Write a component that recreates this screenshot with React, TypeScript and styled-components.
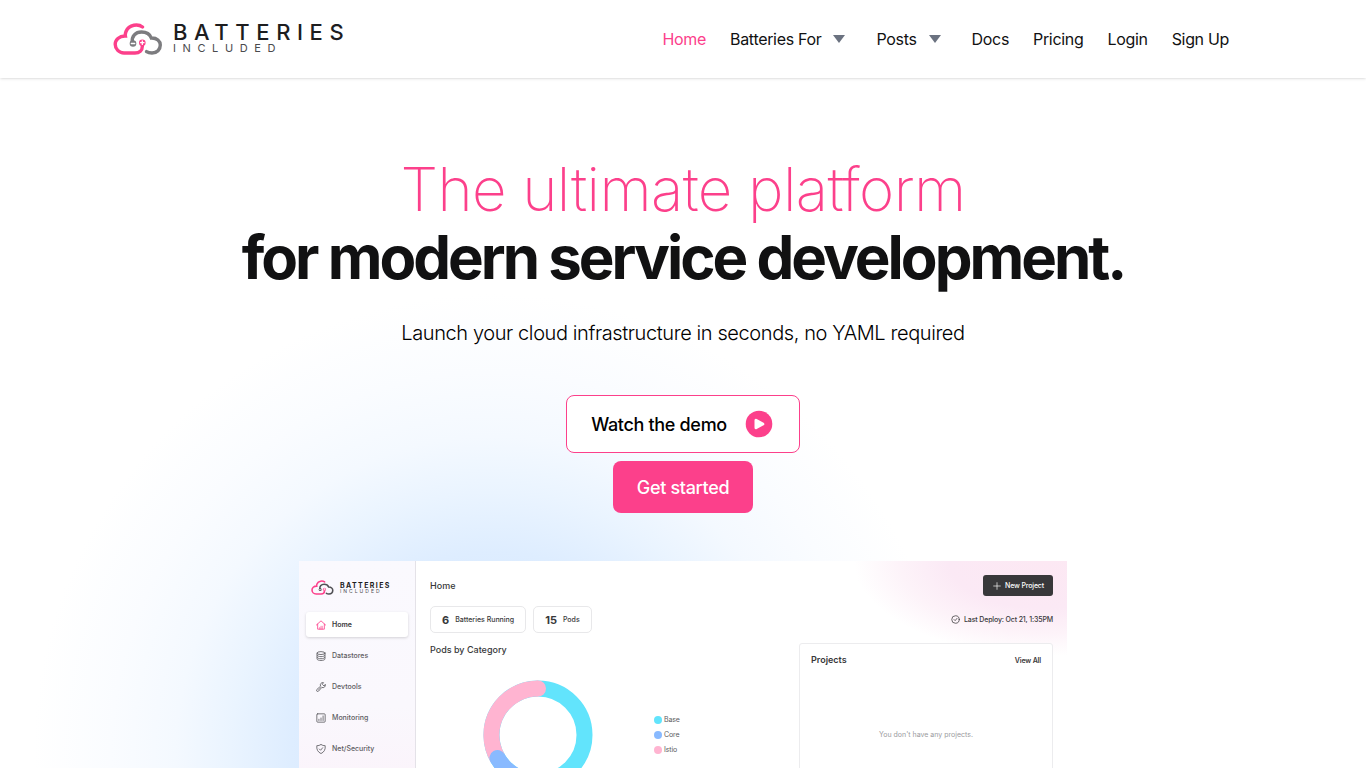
import React from "react";
import styled, { createGlobalStyle } from "styled-components";

const Global = createGlobalStyle`
  * { box-sizing: border-box; }
  html { scrollbar-width: none; }
  body {
    margin: 0;
    background: #fff;
    font-family: Inter, "Liberation Sans", sans-serif;
    letter-spacing: -0.02em;
    color: #111112;
  }
  h1, h2, h3, p, ul { margin: 0; padding: 0; }
  ul { list-style: none; }
  a { color: inherit; text-decoration: none; }
  button { font: inherit; letter-spacing: inherit; cursor: pointer; }
`;

const Page = styled.div`
  min-height: 100vh;
`;

const Header = styled.header`
  background: #fff;
  box-shadow: 0 1px 3px rgba(0, 0, 0, 0.1), 0 1px 2px -1px rgba(0, 0, 0, 0.1);
  position: relative;
`;

const HeaderInner = styled.div`
  max-width: 1140px;
  height: 78px;
  margin: 0 auto;
  padding-right: 12px;
  display: flex;
  align-items: center;
  justify-content: space-between;
`;

const LogoLink = styled.a<{ $small?: boolean }>`
  display: flex;
  align-items: center;
  gap: ${(p) => (p.$small ? "6px" : "10px")};
  margin: ${(p) => (p.$small ? "0 0 17px 5px" : "0")};
`;

const Wordmark = styled.span<{ $small?: boolean }>`
  display: flex;
  flex-direction: column;
  color: #1d1d1f;
  font-size: ${(p) => (p.$small ? "7px" : "22px")};
  line-height: ${(p) => (p.$small ? "7px" : "18px")};
  font-weight: ${(p) => (p.$small ? 700 : 500)};
  letter-spacing: ${(p) => (p.$small ? "0.2em" : "0.3em")};
`;

const WordmarkSub = styled.span<{ $small?: boolean }>`
  color: #4a4a4d;
  font-size: ${(p) => (p.$small ? "5px" : "11px")};
  line-height: ${(p) => (p.$small ? "5px" : "14px")};
  font-weight: 400;
  letter-spacing: ${(p) => (p.$small ? "0.4em" : "0.6em")};
`;

const Nav = styled.nav`
  display: flex;
  align-items: center;
`;

const NavLink = styled.a<{ $active?: boolean }>`
  display: flex;
  align-items: center;
  gap: 12px;
  padding: 8px 12px;
  font-size: 16px;
  line-height: 24px;
  color: ${(p) => (p.$active ? "#fc408b" : "#111112")};
`;

const Caret = styled.span`
  border: 6px solid transparent;
  border-top: 8px solid #6b7280;
  border-bottom: 0;
  margin-right: 7px;
`;

const Hero = styled.main`
  display: flex;
  flex-direction: column;
  align-items: center;
  padding-top: 77px;
  background: radial-gradient(
    circle 460px at calc(50% - 190px) 676px,
    #c8e1ff 0%, #d4e7ff 25%, #deedff 44%, #eaf4ff 57%, #f4f9ff 69%, #fafcff 83%, #ffffff 100%
  );
`;

const Title = styled.h1`
  font-size: 60px;
  line-height: 68px;
  text-align: center;
  font-weight: 700;
  letter-spacing: -0.05em;
`;

const TitleAccent = styled.span`
  display: block;
  font-weight: 200;
  letter-spacing: -0.01em;
  color: #fc408b;
`;

const Lead = styled.p`
  margin-top: 26px;
  font-size: 20px;
  line-height: 32px;
  font-weight: 300;
  letter-spacing: -0.02em;
  color: #000;
`;

const Actions = styled.div`
  display: flex;
  flex-direction: column;
  align-items: center;
  gap: 8px;
  margin-top: 46px;
`;

const ActionButton = styled.button<{ $primary?: boolean }>`
  display: flex;
  align-items: center;
  gap: 18px;
  height: ${(p) => (p.$primary ? "52px" : "58px")};
  padding: ${(p) => (p.$primary ? "0 24px" : "0 26px 0 24px")};
  border: ${(p) => (p.$primary ? "0" : "1px solid #fc408b")};
  border-radius: 8px;
  background: ${(p) => (p.$primary ? "#fc408b" : "#fff")};
  color: ${(p) => (p.$primary ? "#fff" : "#000")};
  font-size: 18px;
  font-weight: 500;
`;

const Preview = styled.section`
  display: flex;
  width: 768px;
  max-width: 100%;
  min-height: 480px;
  margin-top: 48px;
  background: radial-gradient(ellipse 190px 95px at 97% 0, #fce8f3 0%, #fbe9f5 50%, #fdf3f9 76%, #ffffff 100%) #fff;
  color: #38383a;
  letter-spacing: 0;
`;

const Sidebar = styled.aside`
  width: 117px;
  padding: 19px 7px;
  border-right: 1px solid #e4e2e8;
  background: linear-gradient(#faf9fe, #faf8fd 30%, #fcf0f9 60%);
`;

const SideList = styled.ul`
  display: grid;
  gap: 6px;
`;

const SideLink = styled.a<{ $active?: boolean }>`
  display: flex;
  align-items: center;
  gap: 6px;
  height: 25px;
  padding-left: 10px;
  border-radius: 3px;
  font-size: 7px;
  font-weight: ${(p) => (p.$active ? 600 : 500)};
  color: ${(p) => (p.$active ? "#38383a" : "#5c5b60")};
  background: ${(p) => (p.$active ? "#fff" : "transparent")};
  box-shadow: ${(p) => (p.$active ? "0 1px 3px rgba(0, 0, 0, 0.16)" : "none")};
  svg { color: ${(p) => (p.$active ? "#fc408b" : "#5c5b60")}; }
`;

const Content = styled.div`
  flex: 1;
  padding: 14px 14px 0;
`;

const Row = styled.div`
  display: flex;
  align-items: center;
  justify-content: space-between;
`;

const StatsRow = styled(Row)`
  margin-top: 10px;
`;

const Heading = styled.h2`
  font-size: 9px;
  line-height: 14px;
  font-weight: 500;
`;

const NewProject = styled.button`
  display: flex;
  align-items: center;
  gap: 4px;
  height: 21px;
  padding: 0 9px 0 10px;
  border: 0;
  border-radius: 3px;
  background: #38383a;
  color: #fff;
  font-size: 7px;
  font-weight: 500;
  letter-spacing: -0.02em;
`;

const Stats = styled.div`
  display: flex;
  gap: 7px;
`;

const Stat = styled.div`
  display: flex;
  align-items: center;
  gap: 6px;
  height: 27px;
  padding: 0 11px;
  border: 1px solid #e8e8ea;
  border-radius: 5px;
  background: #fff;
  font-size: 7px;
  font-weight: 500;
  strong { font-size: 11px; font-weight: 700; }
`;

const Deploy = styled.p`
  display: flex;
  align-items: center;
  gap: 4px;
  font-size: 7px;
  font-weight: 500;
  letter-spacing: -0.02em;
`;

const Columns = styled.div`
  display: grid;
  grid-template-columns: 1fr 254px;
  margin-top: 10px;
`;

const ChartRow = styled.div`
  display: flex;
  align-items: center;
  gap: 61px;
  padding: 23px 0 0 53px;
`;

const Legend = styled.ul`
  display: grid;
  gap: 5px;
  font-size: 7px;
  line-height: 10px;
  letter-spacing: -0.02em;
  color: #5c5b60;
`;

const LegendItem = styled.li<{ $color: string }>`
  display: flex;
  align-items: center;
  gap: 2px;
  &::before {
    content: "";
    width: 8px;
    height: 8px;
    border-radius: 50%;
    background: ${(p) => p.$color};
  }
`;

const Projects = styled.section`
  min-height: 200px;
  padding: 8px 11px;
  border: 1px solid #ececee;
  border-radius: 3px;
  background: #fff;
`;

const CardTitle = styled.h3`
  font-size: 9px;
  line-height: 16px;
  font-weight: 600;
`;

const ViewAll = styled.a`
  font-size: 7px;
  font-weight: 600;
  letter-spacing: -0.02em;
`;

const Empty = styled.p`
  margin-top: 62px;
  text-align: center;
  font-size: 7px;
  line-height: 10px;
  color: #9a9a9e;
`;

const Logo = ({ small }: { small?: boolean }) => {
  const gray = small ? "#505054" : "#7c7c7f";
  return (
    <LogoLink href="#" $small={small} aria-label="Batteries Included">
      <svg width={small ? 23 : 50} height={small ? 15 : 32} viewBox="0 0 50 32" fill="none" strokeWidth="3.400" strokeLinecap="round" aria-hidden="true">
        <path stroke="#fc408b" d="M29.500 4C25.500 .8 16 1 13 8.500C12.300 10.300 12.200 11.800 12.400 13C6 12.800 2.200 17 2.200 21.200C2.200 26 6 30 11 30H22C26.500 30 29.300 27.500 29.300 23.500V21" />
        <path stroke={gray} d="M19.300 19.500C18.500 13 22.500 9 28.500 9C33.500 9 37 11.500 38.300 15C44 14.800 47.300 18.300 47.300 22C47.300 26.500 44 30 39 30C36.500 30 35 29.600 33.500 28.600" />
        <circle cx="20" cy="20.500" r="3.300" fill={gray} />
        <circle cx="29.300" cy="19.700" r="3.300" fill="#fc408b" />
        <path stroke="#fff" strokeWidth="1.300" d="M18.300 20.500h3.400M27.600 19.700h3.400M29.300 18v3.400" />
      </svg>
      <Wordmark $small={small}>
        BATTERIES
        <WordmarkSub $small={small}>INCLUDED</WordmarkSub>
      </Wordmark>
    </LogoLink>
  );
};

const Icon = ({ size = 10, children }: { size?: number; children: React.ReactNode }) => (
  <svg width={size} height={size} viewBox="0 0 24 24" fill="none" stroke="currentColor" strokeWidth="2" strokeLinecap="round" strokeLinejoin="round" aria-hidden="true">
    {children}
  </svg>
);

const navItems = [
  { label: "Home", active: true },
  { label: "Batteries For", menu: true },
  { label: "Posts", menu: true },
  { label: "Docs" },
  { label: "Pricing" },
  { label: "Login" },
  { label: "Sign Up" },
];

const sideItems = [
  { label: "Home", icon: <><path d="M1 12 12 2l11 10M4 10v12h16V10" /><path d="M9 22v-4M12 22v-7M15 22v-7" strokeWidth="1.500" /></> },
  { label: "Datastores", icon: <><ellipse cx="12" cy="5" rx="9.500" ry="3.500" /><path d="M2.500 5v14c0 5 19 5 19 0V5M2.500 10c0 5 19 5 19 0M2.500 15c0 5 19 5 19 0" /></> },
  { label: "Devtools", icon: <><path d="M22.500 6.500a6 6 0 0 1-8.500 6.500L6 22a2.500 2.500 0 0 1-4-4l9-8a6 6 0 0 1 7-8.500L15 5.500l3.500 3.500z" /><path d="M5 19.500 12 12" strokeWidth="1.200" /></> },
  { label: "Monitoring", icon: <><rect x="2" y="2" width="20" height="20" rx="2" /><path d="M7 18v-3M12 18v-6M17 18V7" /></> },
  { label: "Net/Security", icon: <><path d="M12 1c3 2.500 6 3 10 3 1 9-2 15-10 19C4 19 1 13 2 4c4 0 7-.5 10-3z" /><path d="m8 12 3 3 5-6" /></> },
];

const legend = [
  { label: "Base", color: "#62e4fc" },
  { label: "Core", color: "#89baff" },
  { label: "Istio", color: "#ffb4d1" },
];

const Donut = () => (
  <svg width="110" height="110" viewBox="0 0 110 110" fill="none" strokeWidth="16" role="img" aria-label="Pods by category">
    <circle cx="55" cy="55" r="46.500" stroke="#62e4fc" />
    <path stroke="#ffb4d1" d="M14.500 78A46.500 46.500 0 0 1 55 8.500" />
    <path stroke="#89baff" strokeLinecap="round" d="M14.500 78A46.500 46.500 0 0 0 55 101.500" />
    <circle cx="55" cy="8.500" r="8" fill="#ffb4d1" strokeWidth="0" />
  </svg>
);

export default function App() {
  return (
    <Page>
      <Global />
      <Header>
        <HeaderInner>
          <Logo />
          <Nav>
            {navItems.map((n) => (
              <NavLink key={n.label} href="#" $active={n.active}>
                {n.label}
                {n.menu && <Caret />}
              </NavLink>
            ))}
          </Nav>
        </HeaderInner>
      </Header>
      <Hero>
        <Title>
          <TitleAccent>The ultimate platform</TitleAccent>
          for modern service development.
        </Title>
        <Lead>Launch your cloud infrastructure in seconds, no YAML required</Lead>
        <Actions>
          <ActionButton>
            Watch the demo
            <svg width="28" height="28" viewBox="0 0 28 28" aria-hidden="true">
              <circle cx="14" cy="14" r="13.300" fill="#fc408b" />
              <path d="M11 10.300v7.400l6.800-3.700z" fill="#fff" stroke="#fff" strokeWidth="3" strokeLinejoin="round" />
            </svg>
          </ActionButton>
          <ActionButton $primary>Get started</ActionButton>
        </Actions>
        <Preview>
          <Sidebar>
            <Logo small />
            <SideList>
              {sideItems.map((s, i) => (
                <li key={s.label}>
                  <SideLink href="#" $active={i === 0}>
                    <Icon>{s.icon}</Icon>
                    {s.label}
                  </SideLink>
                </li>
              ))}
            </SideList>
          </Sidebar>
          <Content>
            <Row>
              <Heading>Home</Heading>
              <NewProject>
                <Icon size={8}><path d="M12 2v20M2 12h20" /></Icon>
                New Project
              </NewProject>
            </Row>
            <StatsRow>
              <Stats>
                <Stat><strong>6</strong> Batteries Running</Stat>
                <Stat><strong>15</strong> Pods</Stat>
              </Stats>
              <Deploy>
                <Icon size={9}><circle cx="12" cy="12" r="10" /><path d="m8 12 3 3 5-6" /></Icon>
                Last Deploy: Oct 21, 1:35PM
              </Deploy>
            </StatsRow>
            <Columns>
              <div>
                <Heading>Pods by Category</Heading>
                <ChartRow>
                  <Donut />
                  <Legend>
                    {legend.map((l) => (
                      <LegendItem key={l.label} $color={l.color}>{l.label}</LegendItem>
                    ))}
                  </Legend>
                </ChartRow>
              </div>
              <Projects>
                <Row>
                  <CardTitle>Projects</CardTitle>
                  <ViewAll href="#">View All</ViewAll>
                </Row>
                <Empty>You don't have any projects.</Empty>
              </Projects>
            </Columns>
          </Content>
        </Preview>
      </Hero>
    </Page>
  );
}
